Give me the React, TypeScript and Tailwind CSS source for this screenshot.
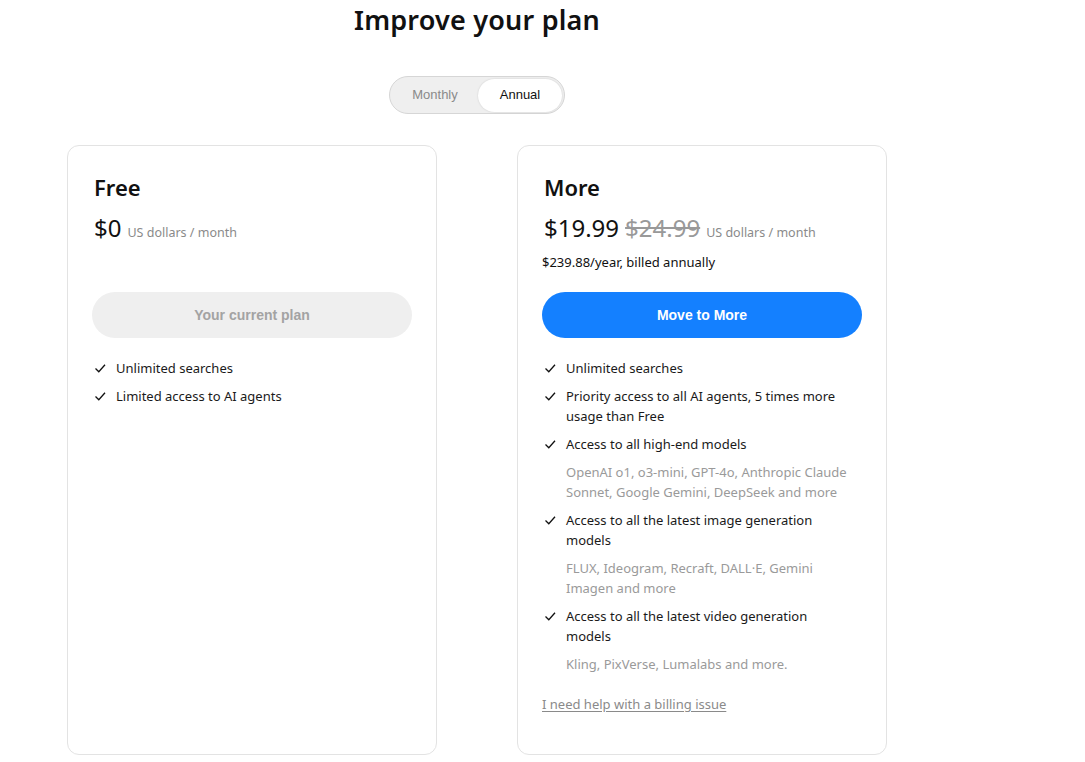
import React from 'react';

type Feature = {
  text: string;
  note?: string;
};

const freeFeatures: Feature[] = [
  { text: 'Unlimited searches' },
  { text: 'Limited access to AI agents' },
];

const moreFeatures: Feature[] = [
  { text: 'Unlimited searches' },
  { text: 'Priority access to all AI agents, 5 times more usage than Free' },
  {
    text: 'Access to all high-end models',
    note: 'OpenAI o1, o3-mini, GPT-4o, Anthropic Claude Sonnet, Google Gemini, DeepSeek and more',
  },
  {
    text: 'Access to all the latest image generation models',
    note: 'FLUX, Ideogram, Recraft, DALL·E, Gemini Imagen and more',
  },
  {
    text: 'Access to all the latest video generation models',
    note: 'Kling, PixVerse, Lumalabs and more.',
  },
];

function Check() {
  return (
    <svg width="13" height="20" viewBox="0 0 13 20" className="shrink-0 ml-[2px]">
      <polyline points="1.5,10.5 4.8,13.8 11,6.8" fill="none" stroke="#111" strokeWidth="1.3" />
    </svg>
  );
}

function FeatureList({ items }: { items: Feature[] }) {
  return (
    <ul className="mt-5 flex flex-col gap-2 pr-3">
      {items.map((f) => (
        <li key={f.text} className="flex flex-col gap-2">
          <div className="flex gap-[9px] text-[13px] leading-5 text-[#1a1a1a]">
            <Check />
            <span>{f.text}</span>
          </div>
          {f.note && (
            <div className="pl-[24px] text-[13px] leading-5 text-[#9a9a9a]">{f.note}</div>
          )}
        </li>
      ))}
    </ul>
  );
}

export default function App() {
  return (
    <div
      className="min-h-screen bg-white text-[#111]"
      style={{ fontFamily: '"Noto Sans", "Open Sans", sans-serif' }}
    >
      <div className="ml-[67px] w-[820px] flex flex-col items-center">
        <h1 className="text-[27px] leading-10 font-semibold tracking-[0.2px]">Improve your plan</h1>

        {/* toggle */}
        <div
          className="mt-9 flex h-[38px] w-[176px] items-center rounded-full border border-[#d6d6d6] bg-[#efefef] p-[2px]"
          style={{ fontFamily: '"Liberation Sans", Arial, sans-serif' }}
        >
          <div className="flex-1 text-center text-[13px] text-[#8a8a8a]">Monthly</div>
          <div className="flex h-[33px] w-[84px] items-center justify-center rounded-full bg-white text-[13px] text-[#111] shadow-[0_0_2px_rgba(0,0,0,0.15)]">
            Annual
          </div>
        </div>

        {/* cards */}
        <div className="mt-[31px] grid w-full grid-cols-2 gap-20">
          <div className="flex flex-col rounded-[12px] border border-[#e3e3e3] px-6 pt-[26px] pb-10">
            <h2 className="pl-[2px] text-[22px] leading-[30px] font-semibold">Free</h2>
            <div className="mt-[10px] flex items-baseline gap-[6px] pl-[2px]">
              <span className="text-[24px] leading-8">$0</span>
              <span className="text-[12.5px] text-[#8a8a8a]">US dollars / month</span>
            </div>
            <div className="h-[28px]" />
            <button
              className="mt-5 h-[46px] w-full rounded-full bg-[#efefef] text-[14px] font-bold text-[#a3a3a3]"
              style={{ fontFamily: '"Liberation Sans", Arial, sans-serif' }}
            >
              Your current plan
            </button>
            <FeatureList items={freeFeatures} />
          </div>

          <div className="flex flex-col rounded-[12px] border border-[#e3e3e3] px-6 pt-[26px] pb-10">
            <h2 className="pl-[2px] text-[22px] leading-[30px] font-semibold">More</h2>
            <div className="mt-[10px] flex items-baseline gap-[6px] pl-[2px]">
              <span className="text-[24px] leading-8">$19.99</span>
              <span className="text-[24px] leading-8 text-[#999] line-through decoration-[1.5px]">$24.99</span>
              <span className="text-[12.5px] text-[#8a8a8a]">US dollars / month</span>
            </div>
            <div className="mt-2 text-[13px] leading-5">$239.88/year, billed annually</div>
            <button
              className="mt-5 h-[46px] w-full rounded-full bg-[#1480ff] text-[14px] font-bold text-white"
              style={{ fontFamily: '"Liberation Sans", Arial, sans-serif' }}
            >
              Move to More
            </button>
            <FeatureList items={moreFeatures} />
            <a href="#" className="mt-5 text-[13px] leading-5 text-[#8a8a8a] underline underline-offset-2">
              I need help with a billing issue
            </a>
          </div>
        </div>
      </div>
    </div>
  );
}
